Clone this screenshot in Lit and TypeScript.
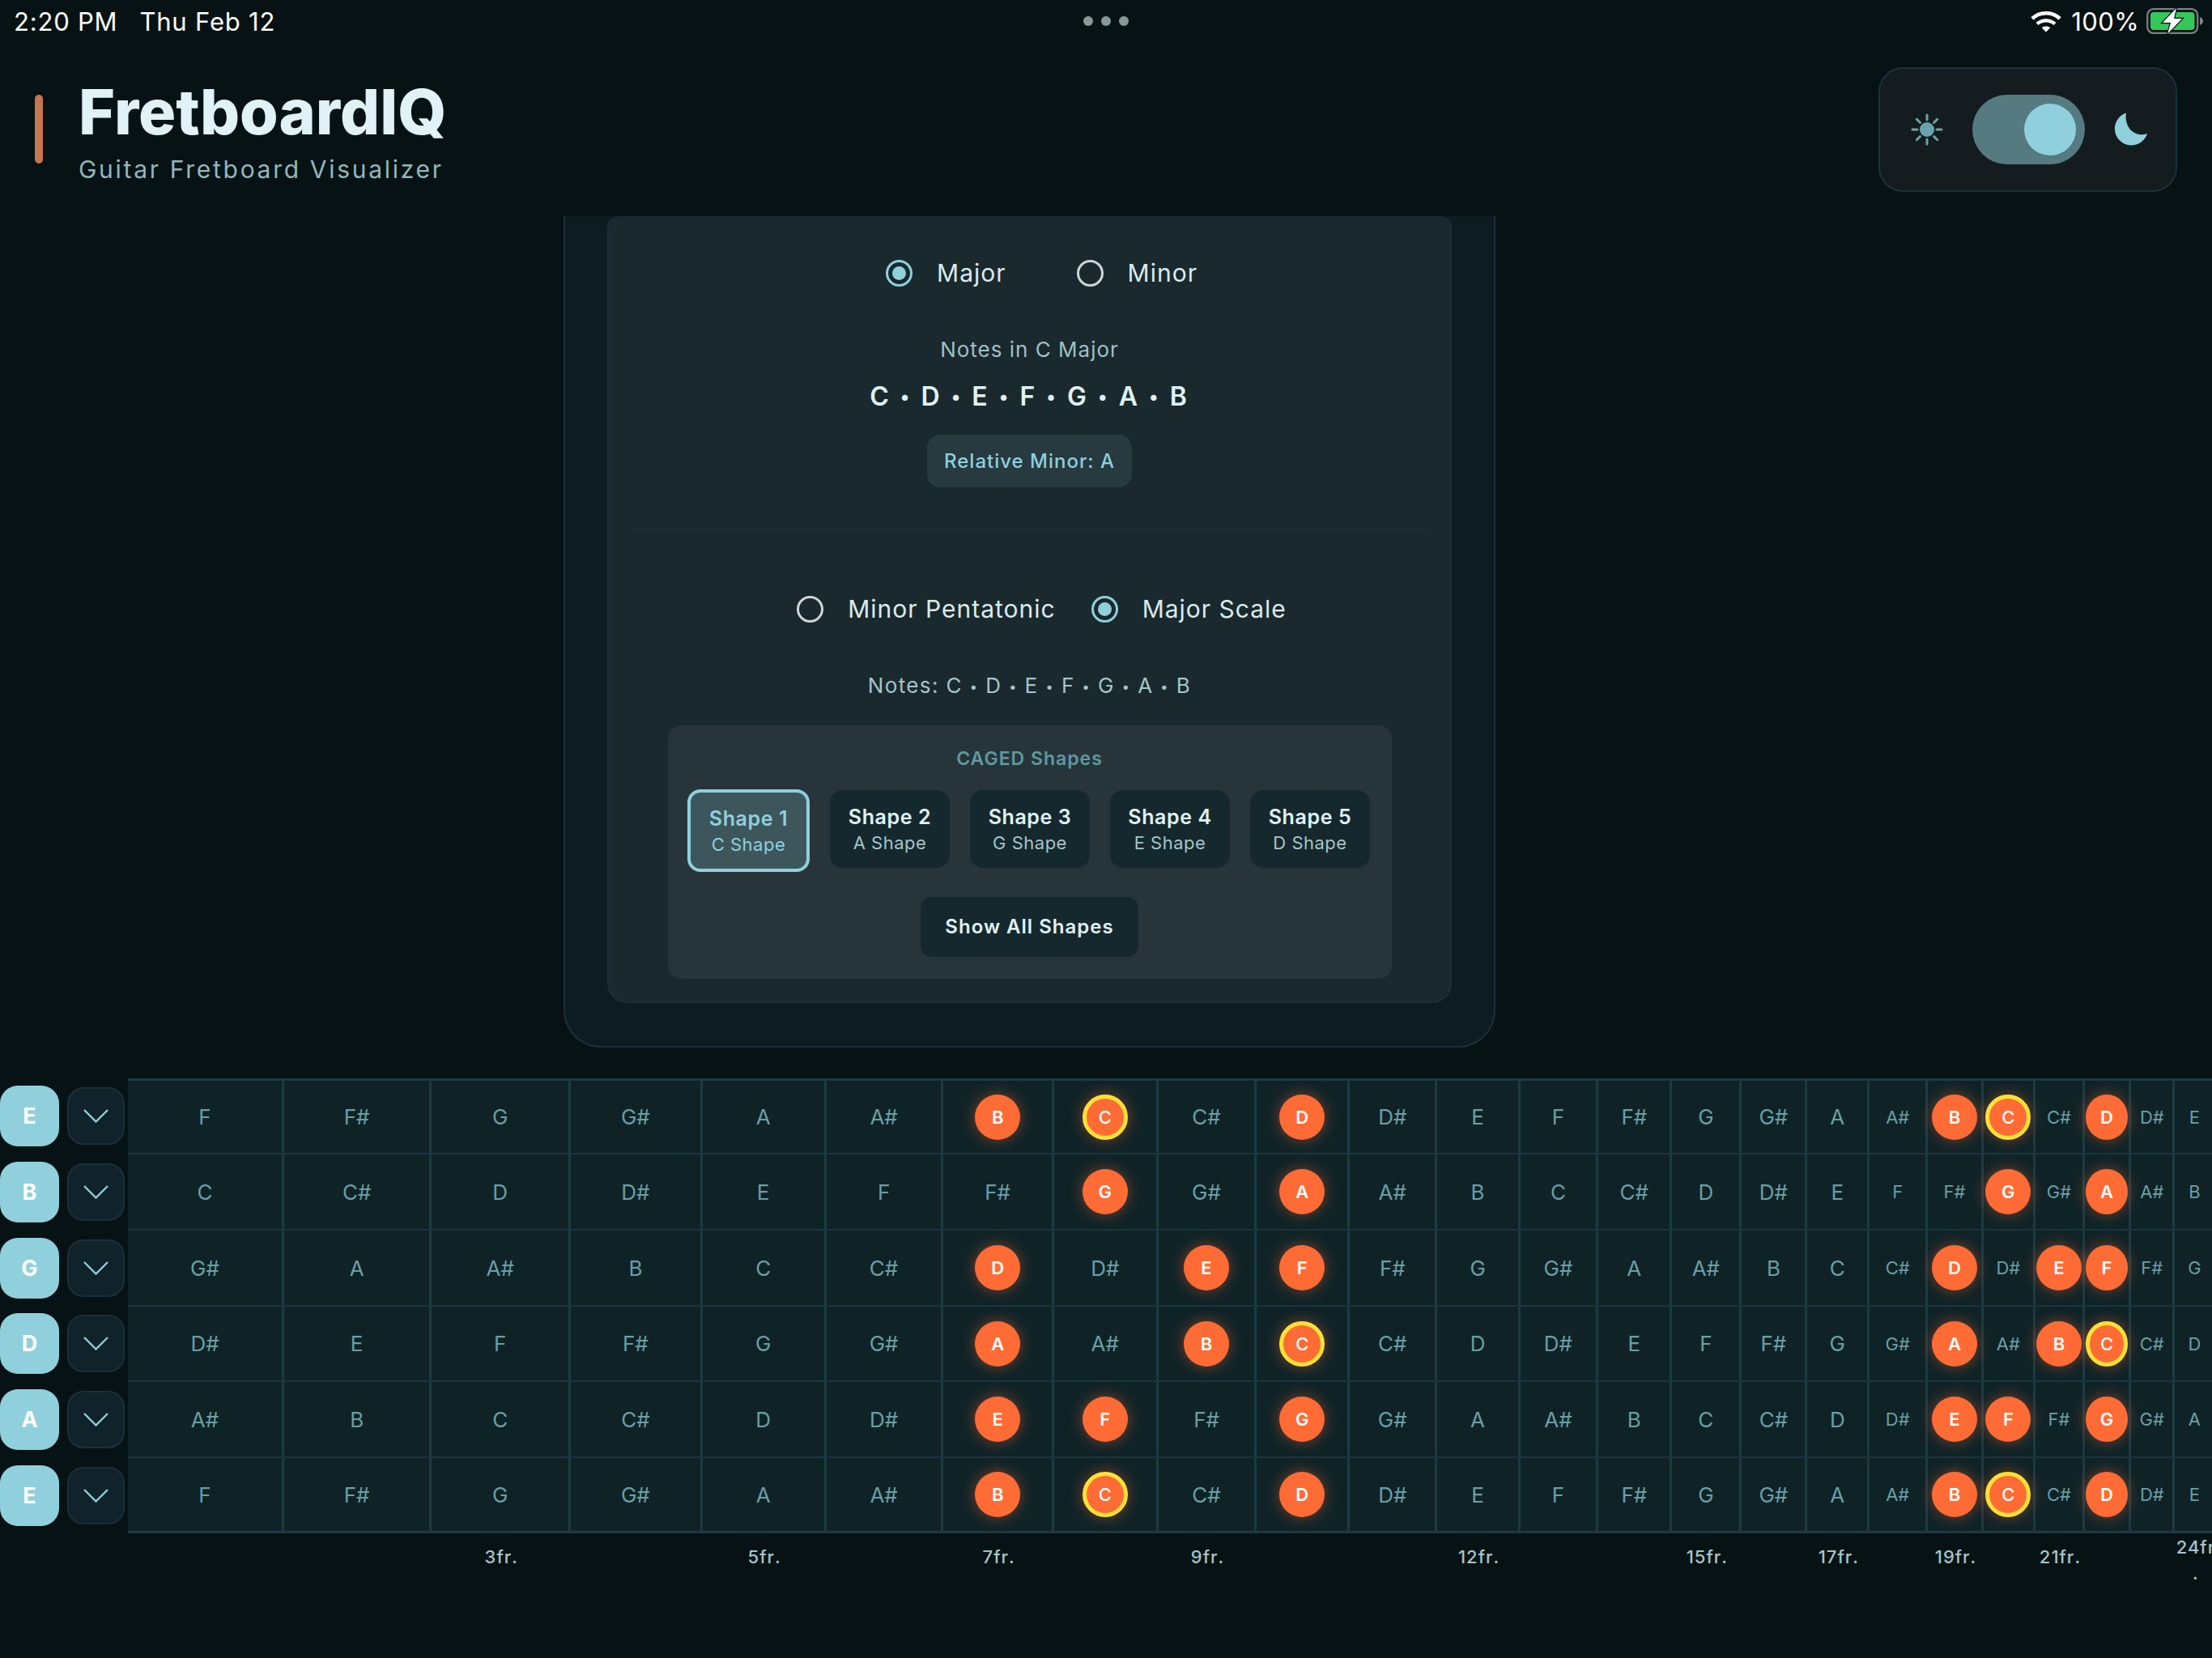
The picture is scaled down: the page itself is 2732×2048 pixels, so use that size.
import { LitElement, html, css, svg } from "lit";
import { customElement } from "lit/decorators.js";

const CHROMA = ["C", "C#", "D", "D#", "E", "F", "F#", "G", "G#", "A", "A#", "B"];
const STRINGS = ["E", "B", "G", "D", "A", "E"];
const SCALE = ["C", "D", "E", "F", "G", "A", "B"];
const SHAPE_FRETS = new Set([7, 8, 9, 10, 19, 20, 21, 22]);
const LABELS = new Set([3, 5, 7, 9, 12, 15, 17, 19, 21, 24]);
const RATIO = Math.pow(2, -1 / 12);
const WIDTHS = Array.from({ length: 24 }, (_, i) => 193.05 * Math.pow(RATIO, i));
const COLS = WIDTHS.map((w) => `${w.toFixed(2)}px`).join(" ");

@customElement("app-root")
export class AppRoot extends LitElement {
  static styles = css`
    :host { display: block; width: 2732px; height: 2048px; overflow: hidden; background: #071214; font-family: Inter, "Liberation Sans", sans-serif; color: #e0f2f6; }
    .page { display: flex; flex-direction: column; height: 2048px; }
    .status { position: relative; height: 50px; flex: none; display: flex; align-items: center; padding: 2px 9px 0 17px; box-sizing: border-box; font-size: 31px; letter-spacing: 0.8px; color: #fff; }
    .status .date { margin-left: 27px; }
    .status .spacer { flex: 1; }
    .status .more { position: absolute; left: 1338px; top: 20px; display: flex; gap: 10px; }
    .status .more i { width: 12px; height: 12px; border-radius: 50%; background: #8a9799; display: block; }
    .status .pct { margin: 0 9px 0 12px; letter-spacing: 0.4px; }
    .header { height: 217px; flex: none; display: flex; justify-content: space-between; align-items: flex-start; padding: 33px 43px 0 43px; box-sizing: border-box; }
    .brand { display: flex; gap: 46px; padding-top: 34px; }
    .accent { width: 10px; height: 85px; background: #c57550; border-radius: 5px; }
    .titles { margin-top: -23px; }
    .title { font-size: 77px; font-weight: 800; line-height: 88px; color: #e0f2f6; margin-left: -2px; white-space: nowrap; }
    .sub { font-size: 30px; line-height: 40px; letter-spacing: 2.7px; color: #93b7bb; margin: 7px 0 0 -2px; white-space: nowrap; }
    .theme { width: 369px; height: 154px; box-sizing: border-box; display: flex; align-items: center; padding: 0 34px 0 38px; background: #141c1f; border: 2px solid #17343a; border-radius: 30px; }
    .track { width: 139px; height: 86px; margin: 0 36px 0 36px; background: #557a80; border-radius: 43px; display: flex; align-items: center; justify-content: flex-end; padding-right: 11px; box-sizing: border-box; }
    .knob { width: 64px; height: 64px; border-radius: 50%; background: #8fd0dc; }
    .main { height: 1065px; flex: none; overflow: hidden; display: flex; padding-left: 696px; box-sizing: border-box; }
    .card { width: 1151px; height: 1027px; box-sizing: border-box; background: #0c1c20; border: 2px solid #1c3136; border-top: none; border-radius: 0 0 46px 46px; padding: 0 52px 0; }
    .panel { height: 972px; box-sizing: border-box; background: #19292e; border: 2px solid #1c2f35; border-top: none; border-radius: 14px 14px 24px 24px; padding-top: 50px; display: flex; flex-direction: column; align-items: center; }
    .radios { display: flex; align-items: center; height: 40px; margin-left: 30px; font-size: 30px; letter-spacing: 1px; color: #dbeaec; }
    .radio { display: flex; align-items: center; gap: 30px; }
    .circle { width: 33px; height: 33px; box-sizing: border-box; border-radius: 50%; border: 3px solid #cfd4d5; display: flex; align-items: center; justify-content: center; }
    .circle.on { border-color: #8fd0dc; }
    .circle.on::after { content: ""; width: 17px; height: 17px; border-radius: 50%; background: #8fd0dc; }
    .r1 { gap: 87px; }
    .r2 { gap: 44px; margin-top: 77px; }
    .nlabel { margin-top: 59px; font-size: 26px; line-height: 32px; letter-spacing: 1px; color: #a0bfc4; }
    .notes { margin-top: 22px; font-size: 32px; line-height: 40px; font-weight: 600; letter-spacing: 3px; color: #e0f2f6; }
    .notes .sep { font-size: 0.72em; vertical-align: 0.12em; }
    .chip { margin-top: 27px; height: 65px; width: 253px; box-sizing: border-box; display: flex; align-items: center; justify-content: center; background: #263a40; border-radius: 16px; font-size: 24px; font-weight: 500; letter-spacing: 1px; color: #8fd0dc; }
    .divider { margin-top: 51px; width: 980px; height: 2px; background: #1f3137; flex: none; }
    .snotes { margin-top: 59px; font-size: 26px; line-height: 32px; letter-spacing: 1.35px; color: #a5c5c9; }
    .snotes .sep { font-size: 0.66em; vertical-align: 0.14em; }
    .shapes { margin-top: 32px; width: 894px; height: 313px; box-sizing: border-box; background: #27353a; border-radius: 16px; padding-top: 26px; display: flex; flex-direction: column; align-items: center; }
    .caged { font-size: 23px; line-height: 30px; font-weight: 600; letter-spacing: 1px; color: #5f9aa0; }
    .row { display: flex; gap: 25px; align-items: flex-start; margin: 23px 0 0 -2px; }
    .shape { width: 148px; height: 96px; margin-top: 1px; box-sizing: border-box; background: #15282e; border-radius: 16px; display: flex; flex-direction: column; align-items: center; justify-content: center; gap: 2px; }
    .shape.on { width: 151px; height: 102px; margin-top: 0; background: #3d565c; border: 4px solid #8fd0dc; }
    .shape b { font-size: 25px; line-height: 32px; font-weight: 600; letter-spacing: 0.6px; color: #e0f2f6; }
    .shape span { font-size: 22px; line-height: 28px; letter-spacing: 0.5px; color: #a5c5c9; }
    .shape.on b, .shape.on span { color: #8fd0dc; }
    .all { margin-top: 31px; width: 269px; height: 74px; background: #15282e; border-radius: 14px; display: flex; align-items: center; justify-content: center; font-size: 24px; font-weight: 600; letter-spacing: 1px; color: #e0f2f6; }
    .fret { display: flex; height: 562px; flex: none; }
    .strings { width: 158px; flex: none; display: grid; grid-template-rows: repeat(6, 93.7px); }
    .sr { display: flex; align-items: center; gap: 10px; }
    .sb { width: 73px; height: 75px; border-radius: 22px; background: #8fd0dc; color: #fff; font-size: 27px; font-weight: 700; display: flex; align-items: center; justify-content: center; }
    .cb { width: 71px; height: 71px; box-sizing: border-box; border-radius: 20px; background: #10222a; border: 2px solid #17313a; display: flex; align-items: center; justify-content: center; }
    .board { flex: none; display: grid; grid-template-rows: 89px 94px 94px 93px 94px 92px; background: #0f2327; border-top: 3px solid #1c3a42; border-bottom: 3px solid #1c3a42; box-sizing: border-box; height: 562px; }
    .brow { display: grid; border-top: 2px solid #1a363d; box-sizing: border-box; }
    .brow:first-child { border-top: none; }
    .cell { display: flex; align-items: center; justify-content: center; border-right: 3px solid #1c3a42; font-size: 26px; color: #6a9fa5; box-sizing: border-box; min-width: 0; }
    .cell.small { font-size: 22px; }
    .dot { height: 56px; box-sizing: border-box; border-radius: 50%; background: #ff6b35; color: #fff; font-size: 22px; font-weight: 600; display: flex; align-items: center; justify-content: center; box-shadow: 0 0 18px rgba(255, 107, 53, 0.45); flex: none; }
    .dot.root { border: 5px solid #ffe135; font-weight: 500; }
    .labels { display: grid; margin-left: 158px; height: 58px; flex: none; }
    .lab { display: flex; align-items: center; justify-content: center; text-align: center; font-size: 22px; font-weight: 500; letter-spacing: 1px; line-height: 32px; color: #a5c5c9; min-width: 0; height: 58px; box-sizing: border-box; }
    .lab span { min-width: 0; width: 100%; }
    .lab.wrapped { padding-top: 8px; }
  `;

  private radio(label: string, on: boolean) {
    return html`<div class="radio"><div class="circle ${on ? "on" : ""}"></div><span>${label}</span></div>`;
  }

  private sun() {
    const rays = [0, 45, 90, 135, 180, 225, 270, 315].map(
      (a) => svg`<line x1="20" y1="2" x2="20" y2="8" transform="rotate(${a} 20 20)" stroke="#6ba3aa" stroke-width="3" stroke-linecap="round"/>`
    );
    return html`<svg width="40" height="40" viewBox="0 0 40 40"><circle cx="20" cy="20" r="9" fill="#6ba3aa"/>${rays}</svg>`;
  }

  private moon() {
    return html`<svg width="42" height="42" viewBox="0 0 42 42"><path d="M15 0.5A20.5 20.5 0 1 0 41 26C29 31 12 22 15 0.5Z" fill="#8fd0dc"/></svg>`;
  }

  private wifi() {
    return html`<svg width="38" height="27" viewBox="0 0 38 27" fill="none" stroke="#fff" stroke-linecap="butt"><path d="M2 10C11 1 27 1 36 10" stroke-width="4.6"/><path d="M8 16.5C14 11 24 11 30 16.5" stroke-width="4.4"/><path d="M19 26.5L13.8 21.3C16.5 18.8 21.5 18.8 24.2 21.3Z" fill="#fff" stroke="none"/></svg>`;
  }

  private battery() {
    return html`<svg width="72" height="34" viewBox="0 0 72 34"><rect x="1.2" y="2.2" width="62" height="29.6" rx="7.5" fill="none" stroke="#7a8486" stroke-width="2.2"/><rect x="5" y="6" width="54.5" height="22" rx="4" fill="#34c759"/><path d="M66 12C69 13 70 15 70 17C70 19 69 21 66 22Z" fill="#7a8486"/><path d="M37 1L20 19H30L26 33L44 14H34Z" fill="#fff" stroke="#071214" stroke-width="2.5" paint-order="stroke"/></svg>`;
  }

  private chevron() {
    return html`<svg width="31" height="17" viewBox="0 0 31 17" fill="none"><path d="M1 1L15.5 15.5L30 1" stroke="#8fd0dc" stroke-width="2.4"/></svg>`;
  }

  private seq() {
    return SCALE.map((n, i) => html`${n}${i < SCALE.length - 1 ? html` <span class="sep">•</span> ` : ""}`);
  }

  private cell(open: string, i: number) {
    const idx = (CHROMA.indexOf(open) + i + 1) % 12;
    const note = CHROMA[idx];
    const fret = i + 1;
    const small = fret >= 18;
    if (SHAPE_FRETS.has(fret) && SCALE.includes(note)) {
      const w = Math.min(56, WIDTHS[i] - 4.5);
      return html`<div class="cell"><div class="dot ${note === "C" ? "root" : ""}" style="width:${w.toFixed(1)}px">${note}</div></div>`;
    }
    return html`<div class="cell ${small ? "small" : ""}">${note}</div>`;
  }

  private label(i: number) {
    const fret = i + 1;
    if (!LABELS.has(fret)) return html`<div class="lab"></div>`;
    return html`<div class="lab ${fret === 24 ? "wrapped" : ""}"><span>${fret}fr<wbr />.</span></div>`;
  }

  render() {
    return html`<div class="page">
      <div class="status">
        <span>2:20 PM</span><span class="date">Thu Feb 12</span>
        <div class="more"><i></i><i></i><i></i></div>
        <span class="spacer"></span>
        ${this.wifi()}<span class="pct">100%</span>${this.battery()}
      </div>
      <div class="header">
        <div class="brand">
          <div class="accent"></div>
          <div class="titles"><div class="title">FretboardIQ</div><div class="sub">Guitar Fretboard Visualizer</div></div>
        </div>
        <div class="theme">${this.sun()}<div class="track"><div class="knob"></div></div>${this.moon()}</div>
      </div>
      <div class="main"><div class="card"><div class="panel">
        <div class="radios r1">${this.radio("Major", true)}${this.radio("Minor", false)}</div>
        <div class="nlabel">Notes in C Major</div>
        <div class="notes">${this.seq()}</div>
        <div class="chip">Relative Minor: A</div>
        <div class="divider"></div>
        <div class="radios r2">${this.radio("Minor Pentatonic", false)}${this.radio("Major Scale", true)}</div>
        <div class="snotes">Notes: ${this.seq()}</div>
        <div class="shapes">
          <div class="caged">CAGED Shapes</div>
          <div class="row">
            ${[["Shape 1", "C Shape"], ["Shape 2", "A Shape"], ["Shape 3", "G Shape"], ["Shape 4", "E Shape"], ["Shape 5", "D Shape"]].map(
              ([a, b], i) => html`<div class="shape ${i === 0 ? "on" : ""}"><b>${a}</b><span>${b}</span></div>`
            )}
          </div>
          <div class="all">Show All Shapes</div>
        </div>
      </div></div></div>
      <div class="fret">
        <div class="strings">
          ${STRINGS.map((s) => html`<div class="sr"><div class="sb">${s}</div><div class="cb">${this.chevron()}</div></div>`)}
        </div>
        <div class="board">
          ${STRINGS.map(
            (s) => html`<div class="brow" style="grid-template-columns:${COLS}">${WIDTHS.map((_, i) => this.cell(s, i))}</div>`
          )}
        </div>
      </div>
      <div class="labels" style="grid-template-columns:${COLS}">${WIDTHS.map((_, i) => this.label(i))}</div>
    </div>`;
  }
}
